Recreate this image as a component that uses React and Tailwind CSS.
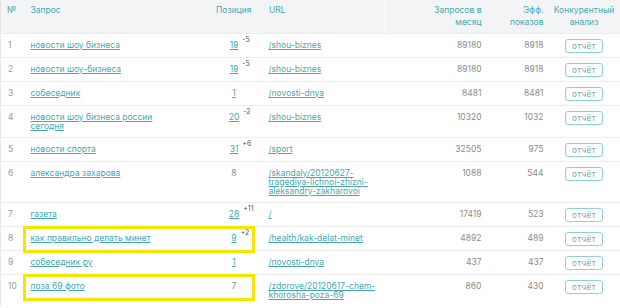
const rows = [
  { n: 1, query: "новости шоу бизнеса", pos: "19", delta: "-5", link: true, url: "/shou-biznes", month: 89180, eff: 8918 },
  { n: 2, query: "новости шоу-бизнеса", pos: "19", delta: "-5", link: true, url: "/shou-biznes", month: 89180, eff: 8918 },
  { n: 3, query: "собеседник", pos: "1", link: true, url: "/novosti-dnya", month: 8481, eff: 8481 },
  { n: 4, query: "новости шоу бизнеса россии сегодня", pos: "20", delta: "-2", link: true, url: "/shou-biznes", month: 10320, eff: 1032 },
  { n: 5, query: "новости спорта", pos: "31", delta: "+6", link: true, url: "/sport", month: 32505, eff: 975 },
  { n: 6, query: "александра захарова", pos: "8", url: "/skandaly/20120627-tragediya-lichnoi-zhizni-aleksandry-zakharovoi", month: 1088, eff: 544 },
  { n: 7, query: "газета", pos: "28", delta: "+11", link: true, url: "/", month: 17419, eff: 523 },
  { n: 8, query: "как правильно делать минет", pos: "9", delta: "+2", link: true, url: "/health/kak-delat-minet", month: 4892, eff: 489, marked: true },
  { n: 9, query: "собеседник ру", pos: "1", link: true, url: "/novosti-dnya", month: 437, eff: 437 },
  { n: 10, query: "поза 69 фото", pos: "7", url: "/zdorove/20120617-chem-khorosha-poza-69", month: 860, eff: 430, marked: true },
];

function Position({ row }) {
  return (
    <span className="relative">
      {row.link ? (
        <a href="#" className="text-[#44a8b2] underline underline-offset-1">
          {row.pos}
        </a>
      ) : (
        <span className="text-[#8a8a8a]">{row.pos}</span>
      )}
      {row.delta && (
        <span className="absolute left-full top-[-4px] ml-[4px] text-[7px] leading-none text-[#555]">
          {row.delta}
        </span>
      )}
    </span>
  );
}

export default function App() {
  return (
    <div className="w-[620px] h-[308px] overflow-hidden bg-white font-['Inter','Liberation_Sans',sans-serif] text-[8.5px]">
      <table className="w-[620px] table-fixed border-collapse border-l border-[#e6e6e6]">
        <colgroup>
          <col className="w-[24px]" />
          <col className="w-[181px]" />
          <col className="w-[57px]" />
          <col className="w-[122px]" />
          <col className="w-[101px]" />
          <col className="w-[62px]" />
          <col className="w-[73px]" />
        </colgroup>
        <thead className="bg-[#f3f4f5] text-[#4ba6b0] leading-[12px]">
          <tr className="h-[33px] align-top">
            <th className="pl-[6px] pt-[4px] text-left font-normal">№</th>
            <th className="pl-[6px] pt-[4px] text-left font-normal">Запрос</th>
            <th className="pt-[4px] text-center font-normal">Позиция</th>
            <th className="pl-[6px] pt-[4px] text-left font-normal border-l border-[#fafafa]">URL</th>
            <th className="pr-[4px] pl-[38px] pt-[4px] text-right font-normal border-l border-[#fafafa]">
              Запросов в месяц
            </th>
            <th className="pr-[4px] pl-[20px] pt-[4px] text-right font-normal">Эфф. показов</th>
            <th className="pt-[4px] text-center font-normal">
              Конкурентный
              <br />
              анализ
            </th>
          </tr>
        </thead>
        <tbody className="leading-[9px]">
          {rows.map((row) => (
            <tr key={row.n} className="align-top border-t border-[#ececec]">
              <td className="pl-[7px] pt-[7px] pb-[6px] text-[#9a9a9a]">{row.n}</td>
              <td className="relative pl-[6px] pr-[40px] pt-[7px] pb-[6px]">
                <a href="#" className="text-[#44a8b2] underline underline-offset-1">
                  {row.query}
                </a>
                {row.marked && (
                  <div className="absolute left-[-2px] top-[-1px] h-[27px] w-[232px] border-[3px] border-[#f5e600]" />
                )}
              </td>
              <td className="pt-[7px] pb-[6px] text-center">
                <Position row={row} />
              </td>
              <td className="pl-[6px] pr-[4px] pt-[7px] pb-[6px] break-words">
                <a href="#" className="text-[#44a8b2] underline underline-offset-1">
                  {row.url}
                </a>
              </td>
              <td className="pr-[4px] pt-[7px] pb-[6px] text-right text-[#8c8c8c]">{row.month}</td>
              <td className="pr-[4px] pt-[7px] pb-[6px] text-right text-[#8c8c8c]">{row.eff}</td>
              <td className="pt-[5px] pb-[4px] text-center">
                <button className="h-[14px] w-[38px] rounded-[3px] border border-[#8fd0d6] text-[8px] leading-[12px] tracking-[0.5px] text-[#6aaab0]">
                  отчёт
                </button>
              </td>
            </tr>
          ))}
        </tbody>
      </table>
    </div>
  );
}
